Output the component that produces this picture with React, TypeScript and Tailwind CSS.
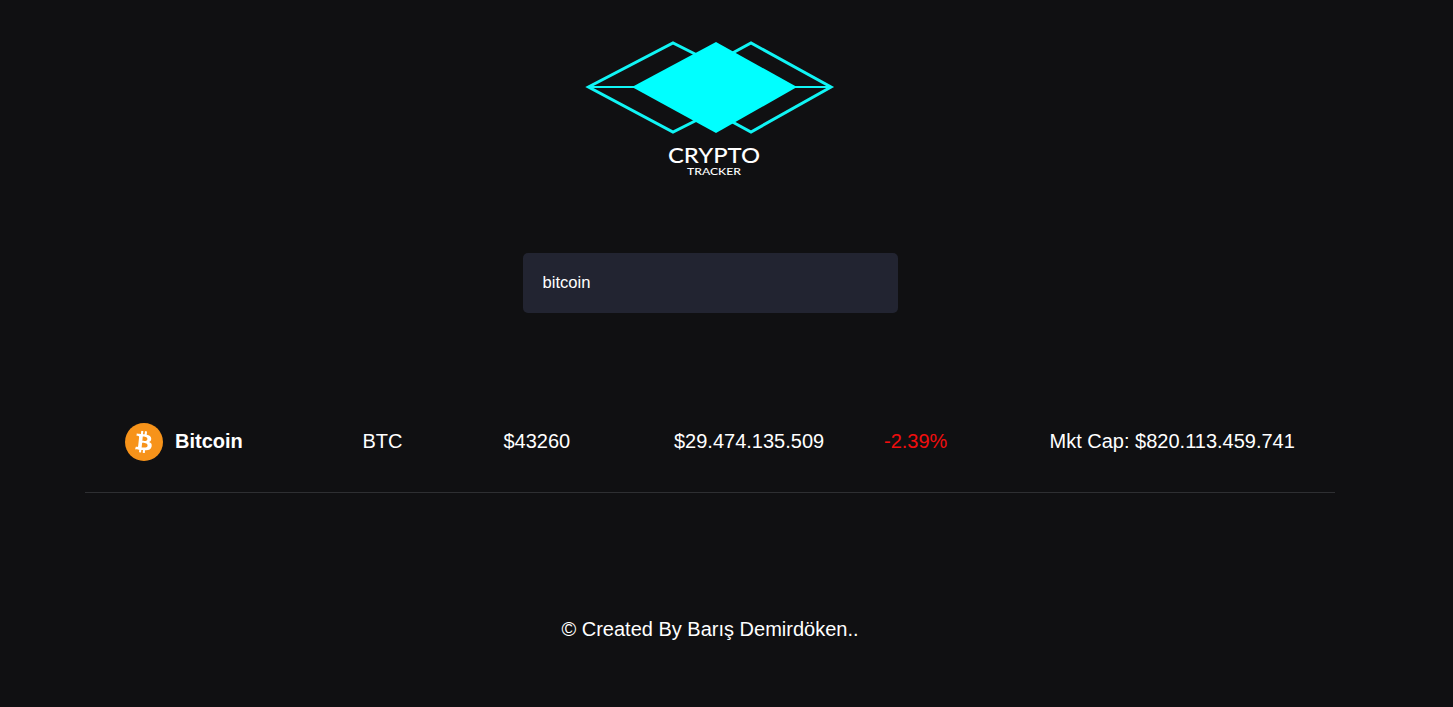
import { FaBtc } from "react-icons/fa";

function Logo() {
  return (
    <svg width="260" height="145" viewBox="580 37 260 145" className="block">
      <polyline points="699,56 673,43 588.5,87 673,132 699,119" fill="none" stroke="#10f5f5" strokeWidth="3" />
      <polyline points="727,56 751,43 831,87 751,132 727,119" fill="none" stroke="#10f5f5" strokeWidth="3" />
      <line x1="590" y1="87" x2="640" y2="87" stroke="#10f5f5" strokeWidth="2" />
      <line x1="790" y1="87" x2="829" y2="87" stroke="#10f5f5" strokeWidth="2" />
      <polygon points="632,87 716,42 797,87 716,133" fill="#00ffff" />
      <text x="668" y="162.5" fontSize="22" fontWeight="500" fill="#ffffff" textLength="92" lengthAdjust="spacingAndGlyphs" fontFamily="Lato, 'Liberation Sans', sans-serif">CRYPTO</text>
      <text x="687" y="175" fontSize="10" fontWeight="500" fill="#ffffff" textLength="54" lengthAdjust="spacingAndGlyphs" fontFamily="Lato, 'Liberation Sans', sans-serif">TRACKER</text>
    </svg>
  );
}

export default function App() {
  return (
    <div className="min-h-[707px] bg-[#101012] text-white font-['Liberation_Sans',Arial,sans-serif]">
      <div className="w-[1420px] flex flex-col items-center">
        <div className="pt-[37px]">
          <Logo />
        </div>
        <input
          readOnly
          value="bitcoin"
          className="mt-[71px] w-[375px] h-[60px] rounded-[5px] bg-[#222431] px-5 text-[16.6px] text-white outline-none"
        />
        <div className="mt-[77px] w-[1250px] h-[103px] border-b border-[#2e2f32] pl-10 flex items-center text-[20px]">
          <div className="w-[237.5px] flex items-center gap-3">
            <div className="w-[38px] h-[38px] mt-px rounded-full bg-[#f7931a] flex items-center justify-center">
              <FaBtc className="text-white text-[22px] rotate-[6deg]" />
            </div>
            <span className="font-bold">Bitcoin</span>
          </div>
          <div className="w-[141px]">BTC</div>
          <div className="w-[170.5px]">$43260</div>
          <div className="w-[210px]">$29.474.135.509</div>
          <div className="w-[165.5px] text-[#f00e0e]">-2.39%</div>
          <div>Mkt Cap: $820.113.459.741</div>
        </div>
        <div className="mt-[121px] text-[20px]">© Created By Barış Demirdöken..</div>
      </div>
    </div>
  );
}
